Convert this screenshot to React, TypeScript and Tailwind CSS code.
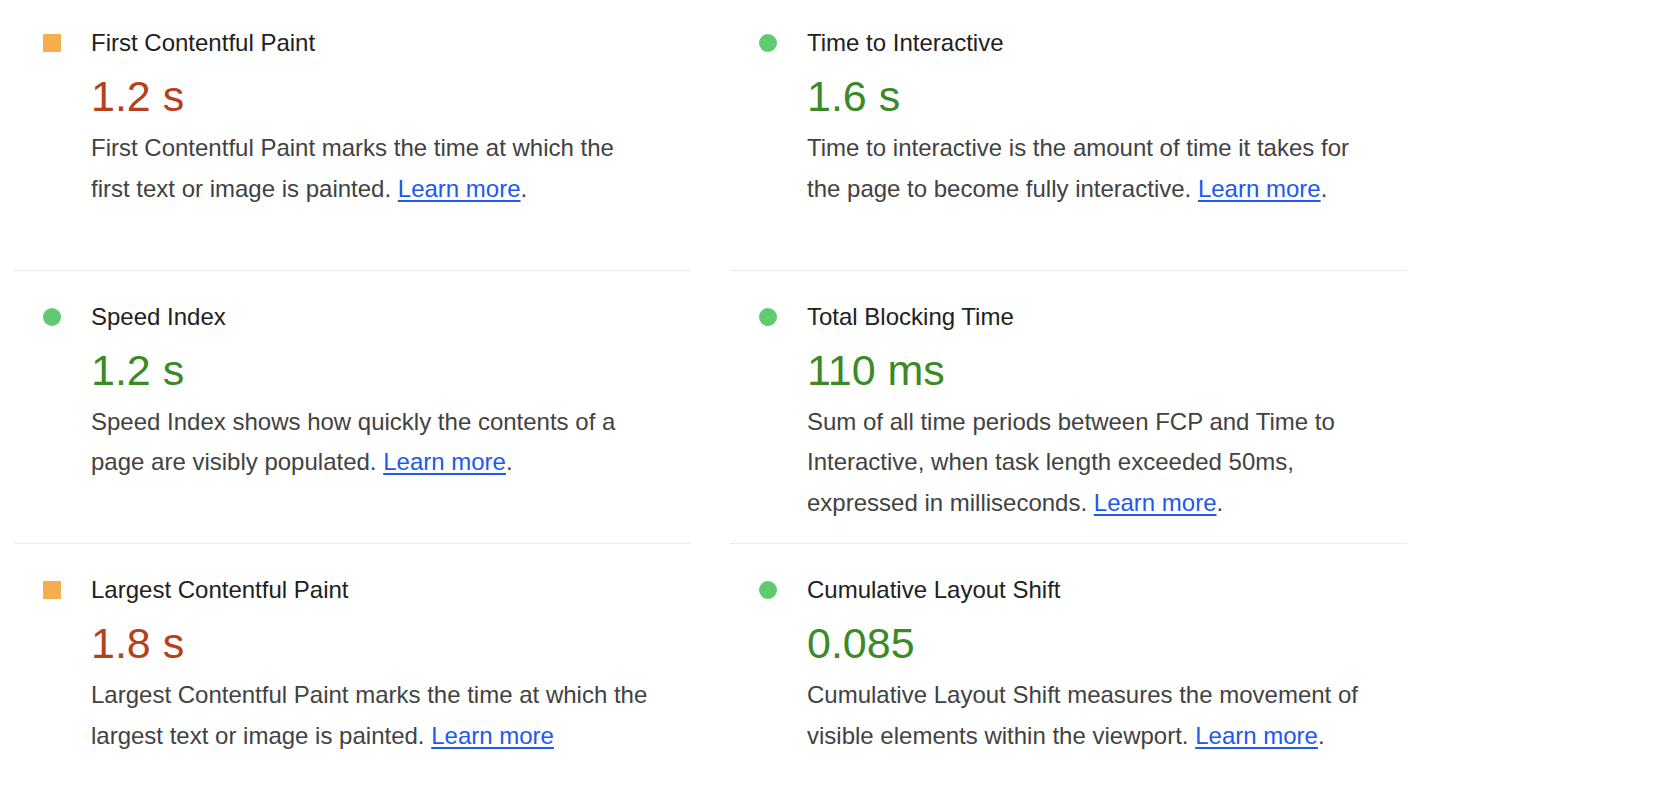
import React from "react"

type Metric = {
  title: string
  value: string
  status: "average" | "pass"
  desc: string
  period?: boolean
}

const metrics: Metric[] = [
  {
    title: "First Contentful Paint",
    value: "1.2 s",
    status: "average",
    desc: "First Contentful Paint marks the time at which the first text or image is painted.",
    period: true,
  },
  {
    title: "Time to Interactive",
    value: "1.6 s",
    status: "pass",
    desc: "Time to interactive is the amount of time it takes for the page to become fully interactive.",
    period: true,
  },
  {
    title: "Speed Index",
    value: "1.2 s",
    status: "pass",
    desc: "Speed Index shows how quickly the contents of a page are visibly populated.",
    period: true,
  },
  {
    title: "Total Blocking Time",
    value: "110 ms",
    status: "pass",
    desc: "Sum of all time periods between FCP and Time to Interactive, when task length exceeded 50ms, expressed in milliseconds.",
    period: true,
  },
  {
    title: "Largest Contentful Paint",
    value: "1.8 s",
    status: "average",
    desc: "Largest Contentful Paint marks the time at which the largest text or image is painted.",
    period: false,
  },
  {
    title: "Cumulative Layout Shift",
    value: "0.085",
    status: "pass",
    desc: "Cumulative Layout Shift measures the movement of visible elements within the viewport.",
    period: true,
  },
]

const MetricCell = ({ m, last }: { m: Metric; last: boolean }) => {
  const avg = m.status === "average"
  return (
    <div className={`pt-[28px] pb-[20px] ${last ? "" : "border-b border-[#ebebeb]"}`}>
      {/* title row */}
      <div className="flex items-center">
        <span className="w-[77px] shrink-0 pl-[29px] flex items-center">
          {avg ? (
            <span className="block w-[18px] h-[18px] bg-[#f4ae4e]" />
          ) : (
            <span className="block w-[18px] h-[18px] rounded-full bg-[#5fcb71]" />
          )}
        </span>
        <span className="text-[24px] leading-[36px] text-[#212121]">{m.title}</span>
      </div>

      {/* value */}
      <div
        className={`pl-[77px] mt-[9px] text-[43px] leading-[52px] ${
          avg ? "text-[#b5401c]" : "text-[#3a8a26]"
        }`}
      >
        {m.value}
      </div>

      {/* description */}
      <p className="pl-[77px] mt-[6px] max-w-[637px] text-[24px] leading-[40.5px] text-[#424242]">
        {m.desc}{" "}
        <a href="#" className="text-[#2058f0] underline underline-offset-[3px]">
          Learn more
        </a>
        {m.period ? "." : ""}
      </p>
    </div>
  )
}

export default function App() {
  return (
    <div
      className="w-[1666px] h-[790px] overflow-hidden bg-white"
      style={{ fontFamily: '"Liberation Sans", Arial, sans-serif' }}
    >
      <div className="-mt-[3px] ml-[14px] w-[1393px] grid grid-cols-2 auto-rows-fr gap-x-[39px]">
        {metrics.map((m, i) => (
          <MetricCell key={m.title} m={m} last={i >= 4} />
        ))}
      </div>
    </div>
  )
}
